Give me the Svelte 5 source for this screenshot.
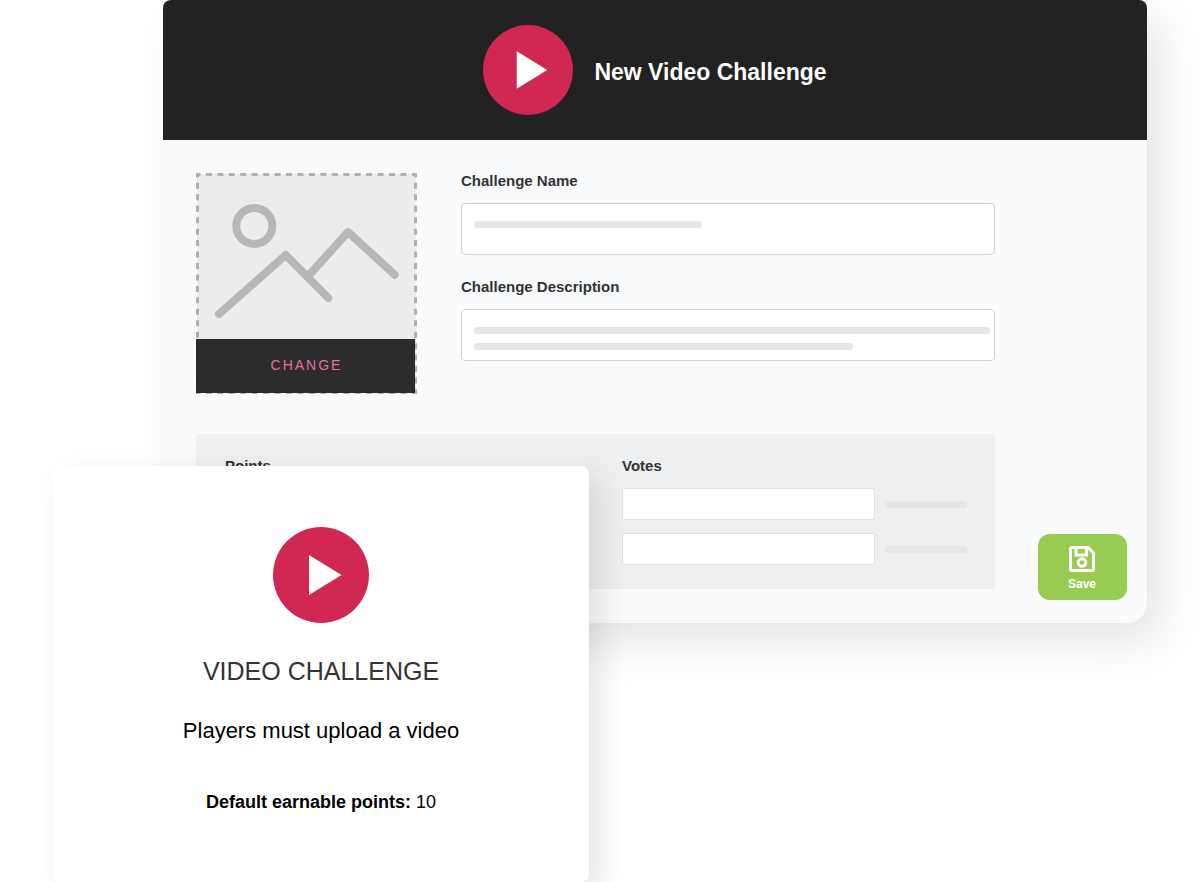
<script lang="ts">
	let name = $state('');
	let description = $state('');

	const voteRows = ['Votes needed', 'Votes per player'];
	const pointRows = ['Points awarded', 'Bonus points'];
</script>

{#snippet playIcon()}
	<svg class="play" viewBox="0 0 96 96" aria-hidden="true">
		<circle cx="48" cy="48" r="48" fill="#d02852" />
		<path d="M36 28 68.5 48 36 68Z" fill="#fff" />
	</svg>
{/snippet}

{#snippet amounts(title: string, rows: string[])}
	<fieldset>
		<legend>{title}</legend>
		{#each rows as row}
			<div class="amount">
				<input type="text" aria-label={row} />
				<span class="bar"></span>
			</div>
		{/each}
	</fieldset>
{/snippet}

<main>
	<section class="panel">
		<header>
			{@render playIcon()}
			<h1>New Video Challenge</h1>
		</header>

		<div class="body">
			<div class="form">
				<div class="top">
					<div class="photo">
						<svg viewBox="0 0 221 221" fill="none" aria-hidden="true">
							<rect x="1" y="1" width="219" height="219" fill="#ebecee" />
							<path
								d="M0 1.5H221M0 219.5H221M1.5 0V221M219.5 0V221"
								stroke="#b0b0b0"
								stroke-width="3"
								stroke-dasharray="6 5.45"
								stroke-dashoffset="1.6"
							/>
							<g stroke="#b7b7b7" stroke-width="8" stroke-linecap="round" stroke-linejoin="round">
								<circle cx="58.3" cy="53" r="18" />
								<path d="M23 141 89.7 82 132.3 125M112.3 103 152 59 198.7 101.7" />
							</g>
						</svg>
						<button class="change" type="button">CHANGE</button>
					</div>

					<div class="fields">
						<label for="name">Challenge Name</label>
						<div class="control">
							<input id="name" type="text" bind:value={name} />
							{#if !name}
								<div class="lines name-lines"><span class="bar"></span></div>
							{/if}
						</div>
						<label for="description">Challenge Description</label>
						<div class="control">
							<textarea id="description" bind:value={description}></textarea>
							{#if !description}
								<div class="lines text-lines">
									<span class="bar"></span>
									<span class="bar"></span>
								</div>
							{/if}
						</div>
					</div>
				</div>

				<div class="scores">
					{@render amounts('Points', pointRows)}
					{@render amounts('Votes', voteRows)}
				</div>
			</div>

			<button class="save" type="button">
				<svg viewBox="0 0 26 26" fill="none" stroke="#fff" stroke-width="3" aria-hidden="true">
					<path d="M3 1.5H19L24.5 7V23Q24.5 24.5 23 24.5H3Q1.5 24.5 1.5 23V3Q1.5 1.5 3 1.5Z" />
					<path d="M7 2V9H17.5V2" />
					<circle cx="13" cy="16.5" r="3.8" />
				</svg>
				Save
			</button>
		</div>
	</section>

	<article class="card">
		{@render playIcon()}
		<h2>VIDEO CHALLENGE</h2>
		<p class="summary">Players must upload a video</p>
		<p class="default"><strong>Default earnable points:</strong> 10</p>
	</article>
</main>

<style>
	:global(body) {
		margin: 0;
		background: #fff;
	}

	main {
		overflow: hidden;
		padding: 0 53px;
		font-family: 'Liberation Sans', Arial, sans-serif;
		color: #333;
	}

	main :global(*) {
		box-sizing: border-box;
	}

	svg {
		display: block;
	}

	.panel {
		margin-left: 110px;
		border-radius: 8px 8px 20px 20px;
		background: #f9fafc;
		box-shadow: 16px 20px 44px rgba(0, 0, 0, 0.1);
	}

	header {
		display: flex;
		align-items: center;
		justify-content: center;
		gap: 21px;
		height: 140px;
		border-radius: 8px 8px 0 0;
		background: #222;
	}

	header .play {
		width: 90px;
		height: 90px;
	}

	h1 {
		margin: 4px 0 0;
		color: #fff;
		font-size: 23px;
		line-height: 28px;
	}

	.body {
		display: flex;
		align-items: flex-end;
		gap: 43px;
		padding: 31px 20px 23px 33px;
	}

	.form {
		flex: 1;
		min-width: 0;
		padding-bottom: 11px;
	}

	.top {
		display: flex;
		align-items: flex-start;
		gap: 44px;
	}

	.photo {
		position: relative;
		flex: none;
		width: 221px;
		margin-top: 2px;
	}

	.change {
		position: absolute;
		right: 2px;
		bottom: 1px;
		left: 0;
		height: 54px;
		padding: 0 0 2px 2px;
		border: 0;
		background: rgba(34, 34, 34, 0.95);
		color: #e6709f;
		font: 14px 'Liberation Sans', Arial, sans-serif;
		letter-spacing: 2px;
	}

	.fields {
		flex: 1;
		min-width: 0;
	}

	label,
	legend {
		display: block;
		padding: 0;
		margin-bottom: 12px;
		font-size: 15px;
		font-weight: 700;
		line-height: 20px;
	}

	.control {
		position: relative;
		margin-bottom: 22px;
	}

	input,
	textarea {
		display: block;
		width: 100%;
		height: 52px;
		padding: 8px 12px;
		border: 1px solid #d0d1d2;
		border-radius: 4px;
		background: #fff;
		font: 15px 'Liberation Sans', Arial, sans-serif;
		resize: none;
	}

	.lines {
		position: absolute;
		inset: 0 5px auto 13px;
		display: grid;
		gap: 9px;
		padding-top: 18px;
		pointer-events: none;
	}

	.bar {
		display: block;
		height: 7px;
		border-radius: 3px;
		background: #e5e6e7;
	}

	.name-lines .bar {
		width: 228px;
	}

	.text-lines .bar:last-child {
		width: 379px;
	}

	.scores {
		display: grid;
		grid-template-columns: 1fr 1fr;
		gap: 52px;
		margin-top: 40px;
		padding: 22px 28px 24px 29px;
		border-radius: 4px;
		background: #eeeff1;
	}

	fieldset {
		display: grid;
		gap: 13px;
		min-width: 0;
		margin: 0;
		padding: 0;
		border: 0;
	}

	.amount {
		display: grid;
		grid-template-columns: 1fr 82px;
		align-items: center;
		gap: 10px;
	}

	.amount input {
		height: 32px;
		border-color: #e0e1e2;
		border-radius: 2px;
	}

	.save {
		display: flex;
		flex: none;
		flex-direction: column;
		align-items: center;
		gap: 4px;
		width: 89px;
		height: 66px;
		padding: 12px 1px 0 0;
		border: 0;
		border-radius: 12px;
		background: #98cb52;
		color: #fff;
		font: bold 12px/16px 'Liberation Sans', Arial, sans-serif;
	}

	.save svg {
		width: 26px;
		height: 26px;
	}

	.card {
		position: relative;
		display: flex;
		flex-direction: column;
		align-items: center;
		width: 49%;
		margin-top: -157px;
		padding: 61px 20px 68px;
		border-radius: 8px;
		background: #fff;
		box-shadow: 11px 11px 32px rgba(0, 0, 0, 0.11);
	}

	.card .play {
		width: 96px;
		height: 96px;
	}

	h2 {
		margin: 32px 0 0;
		font-size: 25px;
		font-weight: 500;
		line-height: 32px;
	}

	.card p {
		margin: 0;
		color: #000;
	}

	.card .summary {
		margin-top: 30px;
		font-size: 22px;
		line-height: 28px;
	}

	.card .default {
		margin-top: 45px;
		font-size: 18px;
		line-height: 24px;
	}
</style>
